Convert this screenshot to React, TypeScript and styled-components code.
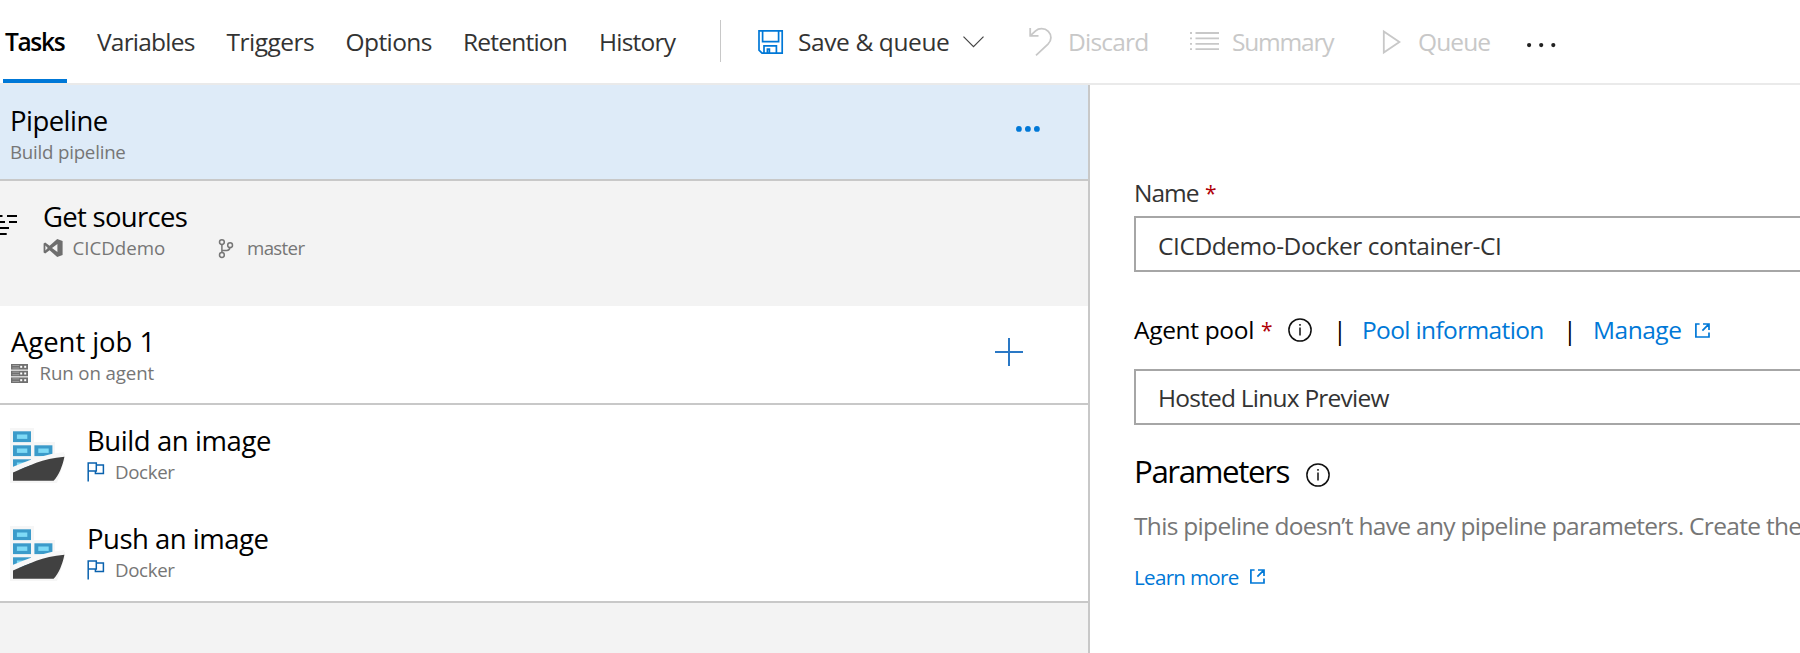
import React from 'react';
import styled, { createGlobalStyle } from 'styled-components';

const GlobalStyle = createGlobalStyle`
  * { box-sizing: border-box; }
  body {
    margin: 0;
    background: #fff;
    color: #000;
    font-family: "Open Sans", "Noto Sans", sans-serif;
    overflow: hidden;
  }
  svg { display: block; flex: none; overflow: visible; }
`;

const Page = styled.div`
  display: flex;
  flex-direction: column;
  width: 1800px;
  height: 653px;
  overflow: hidden;
`;

const Header = styled.header`
  display: flex;
  height: 85px;
  flex: none;
  border-bottom: 2px solid #eaeaea;
`;

const Tabs = styled.nav`
  display: grid;
  grid-template-columns: 92px 129.5px 119px 117.5px 136px 123px;
  padding-left: 3px;
`;

const Tab = styled.a<{ $active?: boolean; $ls: number }>`
  justify-self: start;
  height: 83px;
  padding-left: 2px;
  width: ${p => (p.$active ? '64px' : 'auto')};
  line-height: 83px;
  font-size: 24.5px;
  font-weight: ${p => (p.$active ? 600 : 400)};
  letter-spacing: ${p => p.$ls}px;
  color: ${p => (p.$active ? '#000' : '#333')};
  box-shadow: ${p => (p.$active ? 'inset 0 -4px #0078d7' : 'none')};
  white-space: nowrap;
`;

const Divider = styled.div`
  width: 1px;
  height: 42px;
  margin: 20px 37px 0 0;
  background: #c8c8c8;
`;

const Toolbar = styled.div`
  display: flex;
`;

const Command = styled.button<{ $width: number; $disabled?: boolean }>`
  display: flex;
  align-items: center;
  width: ${p => p.$width}px;
  height: 83px;
  padding: 0;
  border: 0;
  background: none;
  font: inherit;
  color: ${p => (p.$disabled ? '#c8c8c8' : '#333')};
`;

const CommandIcon = styled.span<{ $width: number }>`
  width: ${p => p.$width}px;
  flex: none;
`;

const CommandLabel = styled.span<{ $ls: number; $width?: number }>`
  width: ${p => (p.$width ? `${p.$width}px` : 'auto')};
  flex: none;
  font-size: 24.5px;
  text-align: left;
  letter-spacing: ${p => p.$ls}px;
  white-space: nowrap;
`;

const Body = styled.div`
  display: flex;
  flex: 1;
  min-height: 0;
`;

const Outline = styled.section`
  width: 1090px;
  flex: none;
  border-right: 2px solid #c8c8c8;
  background: #f3f3f3;
`;

const Row = styled.div<{ $height: number; $bg?: string; $ruled?: boolean; $indent: number }>`
  display: flex;
  align-items: flex-start;
  height: ${p => p.$height}px;
  padding: 20px 0 0 ${p => p.$indent}px;
  background: ${p => p.$bg || 'transparent'};
  border-bottom: ${p => (p.$ruled ? '2px solid #c8c8c8' : '0')};
`;

const RowIcon = styled.div<{ $width: number; $top: number }>`
  width: ${p => p.$width}px;
  flex: none;
  padding-top: ${p => p.$top}px;
`;

const RowText = styled.div`
  flex: 1;
`;

const RowAction = styled.div<{ $top: number; $right: number }>`
  padding: ${p => p.$top}px ${p => p.$right}px 0 0;
`;

const Title = styled.div<{ $ls: number }>`
  font-size: 27.5px;
  line-height: 32px;
  letter-spacing: ${p => p.$ls}px;
  white-space: nowrap;
`;

const Meta = styled.div`
  display: flex;
  align-items: center;
  height: 24px;
  margin-top: 3px;
  color: #767676;
`;

const MetaIcon = styled.span<{ $width: number }>`
  width: ${p => p.$width}px;
  flex: none;
`;

const MetaText = styled.span<{ $ls: number; $width?: number }>`
  width: ${p => (p.$width ? `${p.$width}px` : 'auto')};
  font-size: 18.7px;
  line-height: 24px;
  letter-spacing: ${p => p.$ls}px;
  white-space: nowrap;
`;

const Details = styled.section`
  flex: 1;
  min-width: 0;
  padding: 92px 0 0 44px;
  overflow: hidden;
`;

const FieldLine = styled.div<{ $top?: number; $height?: number }>`
  display: flex;
  align-items: center;
  height: ${p => p.$height || 32}px;
  margin-top: ${p => p.$top || 0}px;
  white-space: nowrap;
`;

const Text = styled.span<{ $size?: number; $ls: number; $color?: string; $width?: number }>`
  width: ${p => (p.$width ? `${p.$width}px` : 'auto')};
  flex: none;
  font-size: ${p => p.$size || 24.5}px;
  line-height: 32px;
  letter-spacing: ${p => p.$ls}px;
  color: ${p => p.$color || '#000'};
  white-space: nowrap;
`;

const Star = styled.span<{ $width: number }>`
  width: ${p => p.$width}px;
  flex: none;
  font-size: 21px;
  line-height: 28px;
  color: #b00008;
`;

const Bar = styled.span<{ $width: number }>`
  width: ${p => p.$width}px;
  flex: none;
  font-size: 25px;
  line-height: 30px;
`;

const InfoSlot = styled.span<{ $width: number; $drop?: number }>`
  width: ${p => p.$width}px;
  flex: none;
  padding-top: ${p => p.$drop || 0}px;
`;

const LinkIconSlot = styled.span<{ $lift?: number }>`
  padding-bottom: ${p => p.$lift || 0}px;
`;

const Input = styled.div<{ $top: number; $ls: number; $drop: number }>`
  height: 56px;
  margin: ${p => p.$top}px -4px 0 0;
  padding: ${p => p.$drop}px 0 0 22px;
  border: 2px solid #a6a6a6;
  font-size: 24.5px;
  line-height: 52px;
  letter-spacing: ${p => p.$ls}px;
  color: #333;
  white-space: nowrap;
`;

const SaveIcon = () => (
  <svg width="25" height="24" viewBox="0 0 25 24" fill="none" stroke="#0078d7" strokeWidth="1.7">
    <path d="M1 .8H24.2V23.2H4L1 20.2Z" />
    <path d="M4.6 .8V11.6H20.6V.8" />
    <path d="M6 23V15.8H18.4V23M9.4 23V19.2H11.4V23" />
  </svg>
);

const ChevronIcon = () => (
  <svg width="21" height="12" viewBox="0 0 21 12" fill="none" stroke="#444" strokeWidth="1.2">
    <path d="M.5 .7L10.5 10.7L20.5 .7" />
  </svg>
);

const UndoIcon = () => (
  <svg width="24" height="28" viewBox="0 0 24 28" fill="none" stroke="#c8c8c8" strokeWidth="1.8">
    <path d="M1.2 0V7.8H9.5" />
    <path d="M1.4 7.6L6.6 2.8C8.4 1.2 10.4 .7 12.6 .7C18 .7 21.9 4.8 21.9 9.7C21.9 12.5 20.7 14.4 19 16.1L7 27.4" />
  </svg>
);

const ListIcon = () => (
  <svg width="29" height="19" viewBox="0 0 29 19" fill="none" stroke="#c8c8c8" strokeWidth="1.8">
    <path d="M5.5 1H29M5.5 6.4H29M5.5 11.8H29M5.5 17.2H29M0 1H2M0 6.4H2M0 11.8H2M0 17.2H2" />
  </svg>
);

const PlayIcon = () => (
  <svg width="18" height="24" viewBox="0 0 18 24" fill="none" stroke="#c8c8c8" strokeWidth="1.8">
    <path d="M.8 1.4V22.6L16.4 12Z" />
  </svg>
);

const Dots = ({ color, r, step }: { color: string; r: number; step: number }) => (
  <svg width={step * 2 + r * 2} height={r * 2} fill={color}>
    {[0, 1, 2].map(i => (
      <circle key={i} cx={r + i * step} cy={r} r={r} />
    ))}
  </svg>
);

const SourceIcon = () => (
  <svg width="17" height="21" viewBox="0 0 17 21" stroke="#000" strokeWidth="2">
    <path d="M0 1H2.5M7 1H17M0 7H5M9 7H17M0 13H9M0 19H6.7" />
  </svg>
);

const VisualStudioIcon = () => (
  <svg width="20" height="18" viewBox="0 0 20 18" fill="#6e6e6e">
    <path
      fillRule="evenodd"
      d="M14.2 0L19.6 2V16L14.2 18L6.6 11.2L2.2 14.4L.6 13.6V4.4L2.2 3.6L6.6 6.8ZM14.4 5L9 9L14.4 13ZM2.4 6.6V11.4L4.8 9Z"
    />
  </svg>
);

const BranchIcon = () => (
  <svg width="16" height="19" viewBox="0 0 16 19" fill="none" stroke="#767676" strokeWidth="1.5">
    <circle cx="3.9" cy="3.1" r="2.4" />
    <circle cx="3.9" cy="16" r="2.4" />
    <circle cx="12.1" cy="6.2" r="2.4" />
    <path d="M3.9 5.5V13.6M11.9 8.6C11.7 10.6 10.5 11.4 8.9 11.4H3.9" />
  </svg>
);

const ServerIcon = () => (
  <svg width="17" height="19" viewBox="0 0 17 19">
    {[0, 6.7, 13.4].map(y => (
      <g key={y}>
        <rect y={y} width="17" height="5.6" fill="#707070" />
        <path d={`M1.4 ${y + 1.5}H8.2M1.4 ${y + 4}H8.2`} stroke="#b4b4b4" strokeWidth=".7" />
        <rect x="9.2" y={y + 1.8} width="2" height="2" fill="#fff" />
        <rect x="13.2" y={y + 1.8} width="2" height="2" fill="#fff" />
      </g>
    ))}
  </svg>
);

const PlusIcon = () => (
  <svg width="28" height="28" viewBox="0 0 28 28" stroke="#2a78c5" strokeWidth="2">
    <path d="M0 14H28M14 0V28" />
  </svg>
);

const FlagIcon = () => (
  <svg width="18" height="20" viewBox="0 0 18 20" fill="none" stroke="#0a62ae" strokeWidth="1.5">
    <path d="M1.2 19.5V.9H9.3V9H1.2M9.3 2.9H16.4V11.4H8.4V9" />
  </svg>
);

const Container = ({ x, y }: { x: number; y: number }) => (
  <g>
    <rect x={x} y={y} width="18" height="10.8" fill="#3b9bca" />
    <rect x={x + 3.9} y={y + 3.2} width="10.4" height="4.4" fill="#7fdaf6" />
  </g>
);

const ShipIcon = () => (
  <svg width="56" height="56" viewBox="0 0 56 56">
    <path d="M0 0H24V14H45V28L55 26V31L47 55H0Z" fill="#f6f6f6" />
    <Container x={3} y={3.3} />
    <Container x={3} y={17.3} />
    <Container x={24.4} y={17.3} />
    <Container x={3} y={31.3} />
    <path d="M3 41.6C17 36 31 29.2 54.4 26.6" fill="none" stroke="#f8f8f8" strokeWidth="5" />
    <path d="M3 52.8V44.6C19 38 32 30.6 54.4 28.8C52.6 38 48.6 48 43.6 52.8Z" fill="#414141" />
  </svg>
);

const InfoIcon = () => (
  <svg width="24" height="24" viewBox="0 0 24 24" fill="none" stroke="#111" strokeWidth="1.5">
    <circle cx="12" cy="12" r="11.1" />
    <path d="M12 9.6V17.6M12 6V7.8" />
  </svg>
);

const ExternalIcon = () => (
  <svg width="15" height="15" viewBox="0 0 15 15" fill="none" stroke="#0078d7" strokeWidth="1.7">
    <path d="M4.6 1H.9V14H14V9.6M8 1H14V7M13.8 1.2L7.4 7.6" />
  </svg>
);

const tabs = [
  { label: 'Tasks', ls: -1.34 },
  { label: 'Variables', ls: -0.79 },
  { label: 'Triggers', ls: -0.52 },
  { label: 'Options', ls: -0.58 },
  { label: 'Retention', ls: -0.79 },
  { label: 'History', ls: -0.78 },
];

const dockerTasks = [
  { title: 'Build an image', ls: -0.42 },
  { title: 'Push an image', ls: -0.5 },
];

export default function App() {
  return (
    <>
      <GlobalStyle />
      <Page>
        <Header>
          <Tabs>
            {tabs.map((t, i) => (
              <Tab key={t.label} $active={i === 0} $ls={t.ls}>{t.label}</Tab>
            ))}
          </Tabs>
          <Divider />
          <Toolbar>
            <Command $width={271}>
              <CommandIcon $width={40}><SaveIcon /></CommandIcon>
              <CommandLabel $ls={-0.4} $width={165}>Save &amp; queue</CommandLabel>
              <ChevronIcon />
            </Command>
            <Command $width={161} $disabled>
              <CommandIcon $width={39}><UndoIcon /></CommandIcon>
              <CommandLabel $ls={-0.79}>Discard</CommandLabel>
            </Command>
            <Command $width={193} $disabled>
              <CommandIcon $width={42}><ListIcon /></CommandIcon>
              <CommandLabel $ls={-1.2}>Summary</CommandLabel>
            </Command>
            <Command $width={144} $disabled>
              <CommandIcon $width={35}><PlayIcon /></CommandIcon>
              <CommandLabel $ls={-0.9}>Queue</CommandLabel>
            </Command>
            <RowAction $top={43} $right={0}><Dots color="#222" r={2.1} step={12.1} /></RowAction>
          </Toolbar>
        </Header>
        <Body>
          <Outline>
            <Row $height={96} $bg="#deebf8" $ruled $indent={10}>
              <RowText>
                <Title $ls={-0.54}>Pipeline</Title>
                <Meta><MetaText $ls={-0.22}>Build pipeline</MetaText></Meta>
              </RowText>
              <RowAction $top={21} $right={48}><Dots color="#0078d7" r={2.9} step={9} /></RowAction>
            </Row>
            <Row $height={125} $indent={0}>
              <RowIcon $width={43} $top={14}><SourceIcon /></RowIcon>
              <RowText>
                <Title $ls={-0.7}>Get sources</Title>
                <Meta>
                  <MetaIcon $width={29.5}><VisualStudioIcon /></MetaIcon>
                  <MetaText $ls={0} $width={145.5}>CICDdemo</MetaText>
                  <MetaIcon $width={29}><BranchIcon /></MetaIcon>
                  <MetaText $ls={-0.67}>master</MetaText>
                </Meta>
              </RowText>
            </Row>
            <Row $height={99} $bg="#fff" $ruled $indent={11}>
              <RowText>
                <Title $ls={-0.06}>Agent job 1</Title>
                <Meta>
                  <MetaIcon $width={28.5}><ServerIcon /></MetaIcon>
                  <MetaText $ls={-0.12}>Run on agent</MetaText>
                </Meta>
              </RowText>
              <RowAction $top={12} $right={65}><PlusIcon /></RowAction>
            </Row>
            {dockerTasks.map((t, i) => {
              const last = i === dockerTasks.length - 1;
              return (
                <Row key={t.title} $height={last ? 100 : 98} $bg="#fff" $ruled={last} $indent={10}>
                  <RowIcon $width={77} $top={3}><ShipIcon /></RowIcon>
                  <RowText>
                    <Title $ls={t.ls}>{t.title}</Title>
                    <Meta>
                      <MetaIcon $width={28}><FlagIcon /></MetaIcon>
                      <MetaText $ls={-0.35}>Docker</MetaText>
                    </Meta>
                  </RowText>
                </Row>
              );
            })}
          </Outline>
          <Details>
            <FieldLine>
              <Text $ls={-1} $width={71} $color="#333">Name</Text>
              <Star $width={20}>*</Star>
            </FieldLine>
            <Input $top={7} $ls={-0.44} $drop={2}>CICDdemo-Docker container-CI</Input>
            <FieldLine $top={42}>
              <Text $ls={-0.33} $width={127}>Agent pool</Text>
              <Star $width={27}>*</Star>
              <InfoSlot $width={45}><InfoIcon /></InfoSlot>
              <Bar $width={29}>|</Bar>
              <Text $ls={-0.64} $width={201} $color="#0078d7">Pool information</Text>
              <Bar $width={30}>|</Bar>
              <Text $ls={-0.48} $width={102} $color="#0078d7">Manage</Text>
              <ExternalIcon />
            </FieldLine>
            <Input $top={23} $ls={-0.78} $drop={1}>Hosted Linux Preview</Input>
            <FieldLine $top={26} $height={40}>
              <Text $size={31.3} $ls={-1.45} $width={172}>Parameters</Text>
              <InfoSlot $width={24} $drop={8}><InfoIcon /></InfoSlot>
            </FieldLine>
            <FieldLine $top={19}>
              <Text $ls={-0.69} $color="#767676">
                This pipeline doesn’t have any pipeline parameters. Create the
              </Text>
            </FieldLine>
            <FieldLine $top={21} $height={28}>
              <Text $size={20.6} $ls={-0.7} $width={116} $color="#0078d7">Learn more</Text>
              <LinkIconSlot $lift={2}><ExternalIcon /></LinkIconSlot>
            </FieldLine>
          </Details>
        </Body>
      </Page>
    </>
  );
}
